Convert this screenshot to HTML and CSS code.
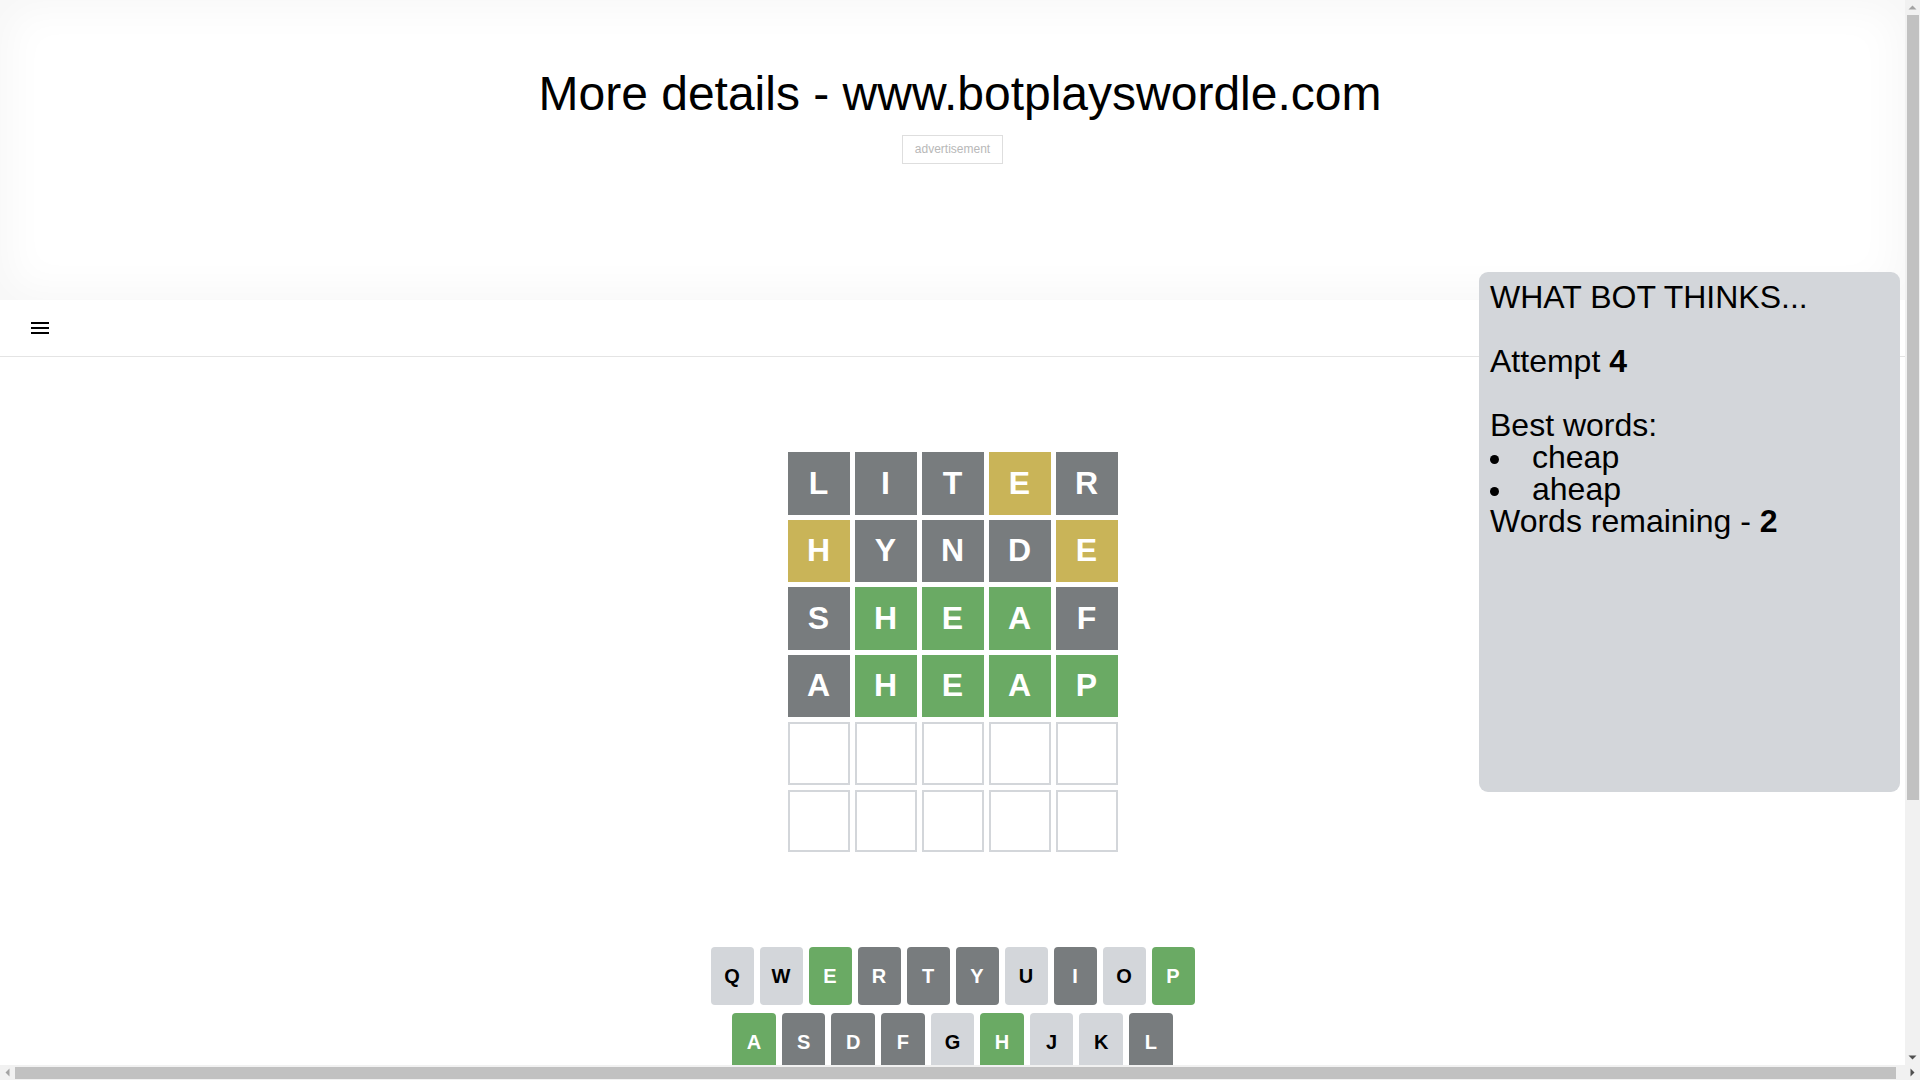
FILE: index.html
```html
<!DOCTYPE html>
<html lang="en">
<head>
    <meta charset="UTF-8">
    <meta name="viewport" content="width=device-width, initial-scale=1.0">
    <title>Bot plays Wordle</title>
    <link rel="stylesheet" href="styles.css">
</head>
<body>
    <div class="promo">
        <h1 class="promo-title">More details - www.botplayswordle.com</h1>
        <div class="ad-label">advertisement</div>
    </div>

    <header class="topbar">
        <button class="menu-btn" aria-label="menu">
            <svg width="24" height="24" viewBox="0 0 24 24"><path d="M3 18h18v-2H3v2zm0-5h18v-2H3v2zm0-7v2h18V6H3z" fill="#000"/></svg>
        </button>
    </header>

    <main class="game">
        <div class="board-container">
            <div class="board">
                <div class="board-row">
                    <div class="tile absent">L</div>
                    <div class="tile absent">I</div>
                    <div class="tile absent">T</div>
                    <div class="tile present">E</div>
                    <div class="tile absent">R</div>
                </div>
                <div class="board-row">
                    <div class="tile present">H</div>
                    <div class="tile absent">Y</div>
                    <div class="tile absent">N</div>
                    <div class="tile absent">D</div>
                    <div class="tile present">E</div>
                </div>
                <div class="board-row">
                    <div class="tile absent">S</div>
                    <div class="tile correct">H</div>
                    <div class="tile correct">E</div>
                    <div class="tile correct">A</div>
                    <div class="tile absent">F</div>
                </div>
                <div class="board-row">
                    <div class="tile absent">A</div>
                    <div class="tile correct">H</div>
                    <div class="tile correct">E</div>
                    <div class="tile correct">A</div>
                    <div class="tile correct">P</div>
                </div>
                <div class="board-row">
                    <div class="tile"></div>
                    <div class="tile"></div>
                    <div class="tile"></div>
                    <div class="tile"></div>
                    <div class="tile"></div>
                </div>
                <div class="board-row">
                    <div class="tile"></div>
                    <div class="tile"></div>
                    <div class="tile"></div>
                    <div class="tile"></div>
                    <div class="tile"></div>
                </div>
            </div>
        </div>

        <div class="keyboard">
            <div class="key-row">
                <button class="key">q</button>
                <button class="key">w</button>
                <button class="key correct">e</button>
                <button class="key absent">r</button>
                <button class="key absent">t</button>
                <button class="key absent">y</button>
                <button class="key">u</button>
                <button class="key absent">i</button>
                <button class="key">o</button>
                <button class="key correct">p</button>
            </div>
            <div class="key-row">
                <div class="half"></div>
                <button class="key correct">a</button>
                <button class="key absent">s</button>
                <button class="key absent">d</button>
                <button class="key absent">f</button>
                <button class="key">g</button>
                <button class="key correct">h</button>
                <button class="key">j</button>
                <button class="key">k</button>
                <button class="key absent">l</button>
                <div class="half"></div>
            </div>
            <div class="key-row">
                <button class="key wide small">enter</button>
                <button class="key">z</button>
                <button class="key">x</button>
                <button class="key">c</button>
                <button class="key">v</button>
                <button class="key">b</button>
                <button class="key absent">n</button>
                <button class="key">m</button>
                <button class="key wide">
                    <svg width="24" height="24" viewBox="0 0 24 24"><path fill="#1a1a1b" d="M22 3H7c-.69 0-1.23.35-1.59.88L0 12l5.41 8.11c.36.53.9.89 1.59.89h15c1.1 0 2-.9 2-2V5c0-1.1-.9-2-2-2zm0 16H7.07L2.4 12l4.66-7H22v14zm-11.59-2L14 13.41 17.59 17 19 15.59 15.41 12 19 8.41 17.59 7 14 10.59 10.41 7 9 8.41 12.59 12 9 15.59z"/></svg>
                </button>
            </div>
        </div>
    </main>

    <aside class="bot-panel">
        <div>WHAT BOT THINKS...</div>
        <br>
        <div>Attempt <b>4</b></div>
        <br>
        <div>Best words:</div>
        <ul class="best-words">
            <li>cheap</li>
            <li>aheap</li>
        </ul>
        <div>Words remaining - <b>2</b></div>
    </aside>

    <!-- window scrollbars, drawn over the page -->
    <div class="scrollbar-v">
        <svg class="sb-btn" width="15" height="15"><polygon points="3.5,9.5 11.5,9.5 7.5,5.5" fill="#a3a3a3"/></svg>
        <div class="sb-thumb-v"></div>
        <div class="sb-fill"></div>
        <svg class="sb-btn" width="15" height="15"><polygon points="3.5,5.5 11.5,5.5 7.5,9.5" fill="#505050"/></svg>
    </div>
    <div class="scrollbar-h">
        <svg class="sb-btn" width="15" height="15"><polygon points="9.5,3.5 9.5,11.5 5.5,7.5" fill="#a3a3a3"/></svg>
        <div class="sb-thumb-h"></div>
        <div class="sb-fill"></div>
        <svg class="sb-btn" width="15" height="15"><polygon points="5.5,3.5 5.5,11.5 9.5,7.5" fill="#505050"/></svg>
    </div>
</body>
</html>
```

FILE: styles.css
```css
* {
    box-sizing: border-box;
}

body {
    position: relative;
    width: 1905px;
    margin: 0;
    font-family: "Liberation Sans", Arial, sans-serif;
    color: #000;
    background-color: white;
}

.promo {
    height: 300px;
    padding-top: 66px;
    text-align: center;
    background-color: white;
    box-shadow: inset 0 0 40px 10px rgba(0,0,0,0.035);
}

.promo-title {
    margin: 0 0 14px;
    padding-left: 15px;
    font-size: 48px;
    font-weight: normal;
}

.ad-label {
    display: inline-block;
    padding: 6px 12px;
    border: 1px solid #dedede;
    font-size: 12px;
    line-height: 15px;
    color: #b8b8b8;
}

.topbar {
    display: flex;
    align-items: center;
    height: 57px;
    padding-left: 28px;
    border-bottom: 1px solid #e4e4e4;
}

.menu-btn {
    display: flex;
    padding: 0;
    border: none;
    background: none;
    cursor: pointer;
}

.game {
    max-width: 500px;
    margin: 0 auto;
    padding-bottom: 260px;
}

.board-container {
    display: flex;
    justify-content: center;
    align-items: center;
    height: 590px;
}

.board {
    display: grid;
    grid-template-rows: repeat(6, 1fr);
    gap: 5px;
    width: 350px;
    height: 420px;
    padding: 10px;
}

.board-row {
    display: grid;
    grid-template-columns: repeat(5, 1fr);
    gap: 5px;
}

.tile {
    display: flex;
    justify-content: center;
    align-items: center;
    border: 2px solid #d3d6da;
    font-size: 32px;
    font-weight: bold;
    color: white;
}

.tile.absent {
    background-color: #787c7e;
    border-color: #787c7e;
}

.tile.present {
    background-color: #c9b458;
    border-color: #c9b458;
}

.tile.correct {
    background-color: #6aaa64;
    border-color: #6aaa64;
}

.keyboard {
    margin: 0 8px;
}

.key-row {
    display: flex;
    width: 100%;
    margin-bottom: 8px;
}

.key {
    flex: 1;
    display: flex;
    justify-content: center;
    align-items: center;
    height: 58px;
    margin: 0 6px 0 0;
    padding: 0;
    border: 0;
    border-radius: 4px;
    background-color: #d3d6da;
    color: #000;
    font-family: inherit;
    font-size: 20px;
    font-weight: bold;
    text-transform: uppercase;
    cursor: pointer;
}

.key:last-of-type {
    margin: 0;
}

.key.wide {
    flex: 1.5;
}

.key.small {
    font-size: 12px;
}

.key.absent {
    background-color: #787c7e;
    color: white;
}

.key.correct {
    background-color: #6aaa64;
    color: white;
}

.half {
    flex: 0.5;
}

.bot-panel {
    position: absolute;
    top: 272px;
    right: 5px;
    width: 421px;
    height: 520px;
    padding: 9px 11px;
    border-radius: 9px;
    background-color: #d3d6da;
    font-size: 32px;
    line-height: 32px;
}

.best-words {
    margin: 0;
    padding: 0;
    list-style: none;
}

.best-words li::before {
    content: "";
    display: inline-block;
    width: 9px;
    height: 9px;
    margin-right: 33px;
    border-radius: 50%;
    background-color: #000;
    vertical-align: middle;
}

/* scrollbars */
.scrollbar-v {
    position: fixed;
    top: 0;
    right: 0;
    display: flex;
    flex-direction: column;
    width: 15px;
    height: 1065px;
    background-color: #f1f1f1;
}

.scrollbar-h {
    position: fixed;
    left: 0;
    bottom: 0;
    display: flex;
    width: 100%;
    height: 15px;
    background-color: #f1f1f1;
}

.sb-btn {
    flex: none;
    display: block;
}

.sb-fill {
    flex: 1;
}

.sb-thumb-v {
    flex: none;
    height: 785px;
    margin: 0 1px 0 2px;
    background-color: #c1c1c1;
}

.sb-thumb-h {
    flex: none;
    width: 1881px;
    margin: 2px 0 1px;
    background-color: #c1c1c1;
}
```
